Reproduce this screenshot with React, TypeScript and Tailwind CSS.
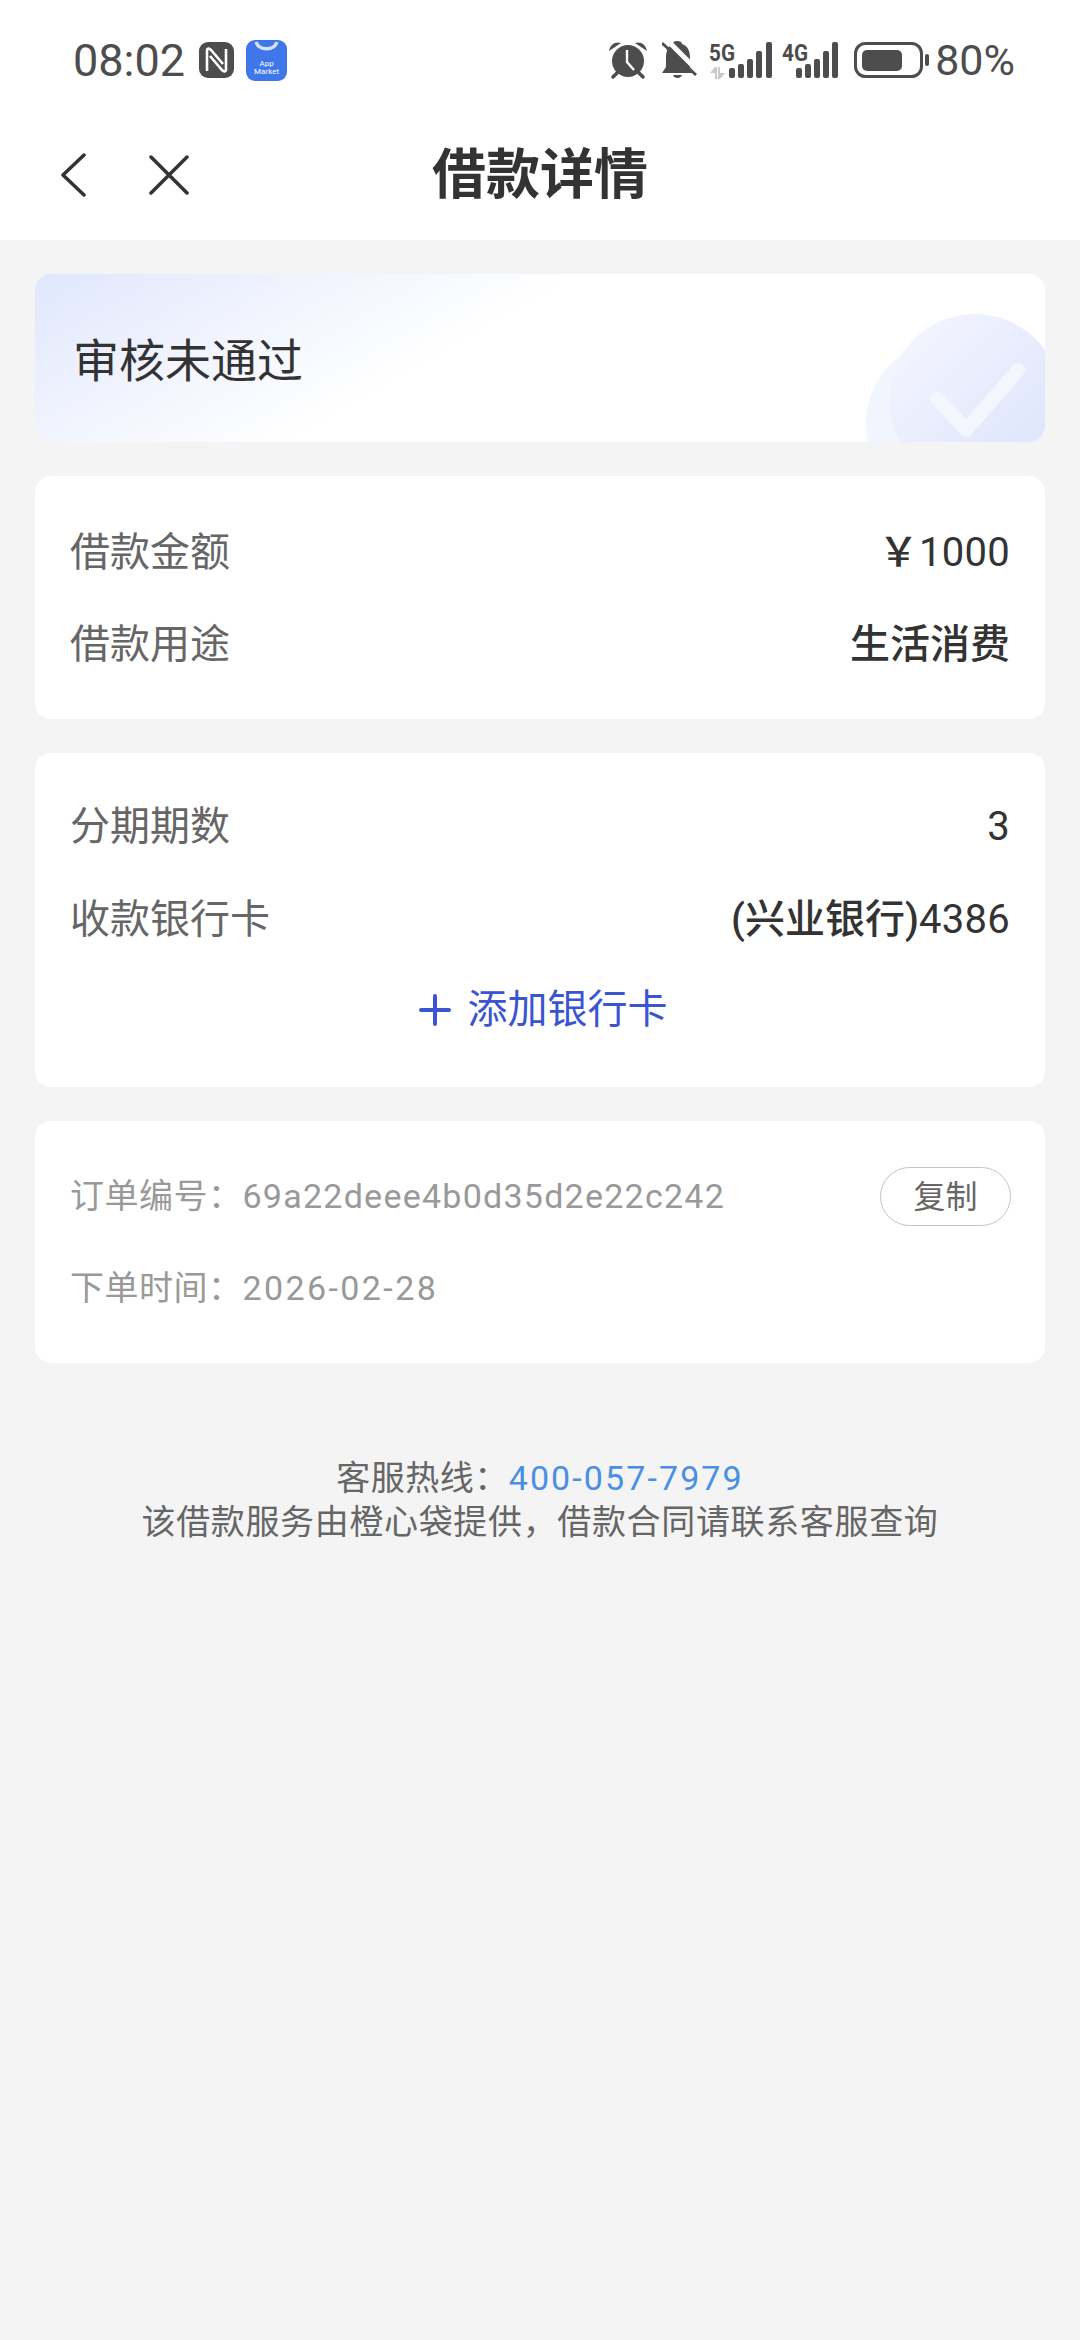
const FONT = "font-['Roboto','Noto_Sans_CJK_SC',sans-serif]";

function StatusIcons() {
  return (
    <div className="flex items-center">
      {/* alarm */}
      <svg width="38" height="38" viewBox="0 0 38 38" className="text-[#4d4d4d]">
        <circle cx="19" cy="20" r="16" fill="currentColor" />
        <path d="M0 10 C1 3 7 0 12 2 Z M38 10 C37 3 31 0 26 2 Z" fill="currentColor" />
        <path d="M8 32 L4 36 M30 32 L34 36" stroke="currentColor" strokeWidth="3.5" strokeLinecap="round" />
        <path d="M18 9 V21 L25 29" fill="none" stroke="#fff" strokeWidth="2.4" />
      </svg>
      {/* muted bell */}
      <svg width="36" height="38" viewBox="0 0 36 38" className="ml-[15px]">
        <path d="M15 0 C18 0 20 1 20 3 C26 5 28 10 28 17 V26 L31 32 H0 L4 26 V17 C4 10 6 5 11 3 C11 1 12 0 15 0 Z" fill="#4d4d4d" />
        <path d="M11 34 H20 C19 38 12 38 11 34 Z" fill="#4d4d4d" />
        <path d="M3 -3 L37 31" stroke="#fff" strokeWidth="5" />
        <path d="M0 2 L34 34" stroke="#4d4d4d" strokeWidth="2.8" />
        <path d="M-2 -6 L8 4 L0 12 Z" fill="#fff" />
        <path d="M0 2 L6 7.6" stroke="#4d4d4d" strokeWidth="2.8" />
      </svg>
      {/* 5G */}
      <svg width="64" height="38" viewBox="0 0 64 38" className="ml-[11px] overflow-visible">
        <text x="0" y="20" fontFamily="Roboto, sans-serif" fontSize="24" fontWeight="700" fill="#4d4d4d" textLength="26" lengthAdjust="spacingAndGlyphs">5G</text>
        <path d="M6 26 L1 32 H6 V38 H8 V26 Z M11 38 L16 32 H11 V26 H9 V38 Z" fill="#c9c9c9" />
        <rect x="20" y="27" width="6" height="10" rx="2" fill="#4d4d4d" />
        <rect x="29" y="23" width="6" height="14" rx="2" fill="#4d4d4d" />
        <rect x="38" y="18" width="6" height="19" rx="2" fill="#4d4d4d" />
        <rect x="47" y="10" width="6" height="27" rx="2" fill="#4d4d4d" />
        <rect x="57" y="1" width="6" height="36" rx="2" fill="#4d4d4d" />
      </svg>
      {/* 4G */}
      <svg width="57" height="38" viewBox="0 0 57 38" className="ml-[9px] overflow-visible">
        <text x="0" y="20" fontFamily="Roboto, sans-serif" fontSize="24" fontWeight="700" fill="#4d4d4d" textLength="26" lengthAdjust="spacingAndGlyphs">4G</text>
        <rect x="14" y="27" width="6" height="10" rx="2" fill="#4d4d4d" />
        <rect x="23" y="23" width="6" height="14" rx="2" fill="#4d4d4d" />
        <rect x="32" y="18" width="6" height="19" rx="2" fill="#4d4d4d" />
        <rect x="41" y="10" width="6" height="27" rx="2" fill="#4d4d4d" />
        <rect x="50" y="1" width="6" height="36" rx="2" fill="#4d4d4d" />
      </svg>
      {/* battery */}
      <svg width="76" height="38" viewBox="0 0 76 38" className="ml-[15px]">
        <rect x="1.5" y="2.5" width="66" height="33" rx="10" fill="none" stroke="#4d4d4d" strokeWidth="3" />
        <rect x="8" y="9" width="40" height="21" rx="5" fill="#4d4d4d" />
        <rect x="71" y="13" width="4" height="12" rx="2" fill="#4d4d4d" />
      </svg>
      <span className="ml-[5px] text-[43px] leading-none text-[#4d4d4d]">80%</span>
    </div>
  );
}

function Row({ label, cjk, digits, className }: { label: string; cjk?: string; digits?: string; className: string }) {
  return (
    <div className={`flex items-center justify-between ${className}`}>
      <span className="text-[40px] text-[#666666]">{label}</span>
      <span className="text-[40px] text-[#333333]">
        {cjk && <span className="font-medium">{cjk}</span>}
        {digits && <span className="font-[450] tracking-[0.3px]">{digits}</span>}
      </span>
    </div>
  );
}

export default function App() {
  return (
    <div className={`flex min-h-[2340px] w-[1080px] flex-col bg-[#f4f4f4] ${FONT}`}>
      {/* status bar */}
      <div className="flex h-[120px] items-center justify-between bg-white pr-[65px] pl-[73px]">
        <div className="flex items-center">
          <span className="text-[45px] leading-none text-[#4d4d4d]">08:02</span>
          <svg width="35" height="36" viewBox="0 0 35 36" className="ml-[14px]">
            <rect x="0" y="0" width="35" height="36" rx="9" fill="#4d4d4d" />
            <path d="M8 29 V9 C8 6 10 6 12 8 L24 22 M27 7 V27 C27 30 25 30 23 28 L11 14" fill="none" stroke="#fff" strokeWidth="2.6" />
          </svg>
          <div className="relative ml-[12px] h-[41px] w-[41px] rounded-[9px] bg-[#3f76ea]">
            <svg width="41" height="14" viewBox="0 0 41 14" className="absolute top-0 left-0">
              <path d="M10 2 C13 11 28 11 31 2" fill="none" stroke="#d6e2fb" strokeWidth="3.5" />
            </svg>
            <div className="absolute right-0 bottom-[5px] left-0 text-center text-[8px] leading-[8px] text-white">
              App
              <br />
              Market
            </div>
          </div>
        </div>
        <StatusIcons />
      </div>

      {/* nav */}
      <div className="relative flex h-[120px] items-center justify-center bg-white pb-[8px]">
        <svg width="26" height="44" viewBox="0 0 26 44" className="absolute top-[33px] left-[60px]">
          <path d="M24 2 L3 22 L24 42" fill="none" stroke="#333333" strokeWidth="3.5" strokeLinecap="round" strokeLinejoin="round" />
        </svg>
        <svg width="40" height="40" viewBox="0 0 40 40" className="absolute top-[35px] left-[149px]">
          <path d="M2 2 L38 38 M38 2 L2 38" fill="none" stroke="#333333" strokeWidth="3.5" strokeLinecap="round" />
        </svg>
        <span className="text-[54px] leading-none font-bold text-[#333333]">借款详情</span>
      </div>

      <div className="flex flex-col gap-[34px] px-[35px] pt-[34px]">
        {/* status card */}
        <div className="relative flex h-[168px] items-center overflow-hidden rounded-[16px] bg-[linear-gradient(150deg,#e0e7fd_0%,#f1f4fe_22%,#ffffff_42%)] pt-[6px] pl-[38px]">
          <span className="text-[46px] text-[#333333]">审核未通过</span>
          <svg width="190" height="140" viewBox="0 0 190 140" className="absolute right-0 bottom-0">
            <defs>
              <linearGradient id="disc" x1="0" y1="0" x2="1" y2="1">
                <stop offset="0%" stopColor="#f6f7fe" />
                <stop offset="100%" stopColor="#d9e1fc" />
              </linearGradient>
            </defs>
            <circle cx="93" cy="121" r="82" fill="#f3f5fe" />
            <circle cx="120" cy="98" r="86" fill="url(#disc)" />
            <path d="M82 96 L111 128 L163 68" fill="none" stroke="#f4f6fe" strokeWidth="14" strokeLinecap="round" strokeLinejoin="round" />
          </svg>
        </div>

        <div className="rounded-[16px] bg-white px-[35px] pt-[31px] pb-[28px]">
          <Row label="借款金额" digits="￥1000" className="h-[91px]" />
          <Row label="借款用途" cjk="生活消费" className="h-[93px]" />
        </div>

        <div className="rounded-[16px] bg-white px-[35px] pt-[28px] pb-[34px]">
          <Row label="分期期数" digits="3" className="h-[92px]" />
          <Row label="收款银行卡" cjk="(兴业银行)" digits="4386" className="h-[94px]" />
          <div className="ml-[6px] flex h-[86px] items-center justify-center">
            <svg width="32" height="32" viewBox="0 0 32 32" className="mr-[17px]">
              <path d="M16 2 V30 M2 16 H30" stroke="#3b55d0" strokeWidth="4" strokeLinecap="round" />
            </svg>
            <span className="text-[40px] text-[#3b55d0]">添加银行卡</span>
          </div>
        </div>

        <div className="rounded-[16px] bg-white px-[35px] pt-[30px] pb-[28px]">
          <div className="flex h-[91px] items-center justify-between">
            <span className="text-[34px] text-[#999999]">
              <span className="tracking-[0.5px]">订单编号：</span>
              <span className="tracking-[1.25px]">69a22deee4b0d35d2e22c242</span>
            </span>
            <button className="-mr-px flex h-[59px] w-[131px] items-center justify-center rounded-full border border-[#c4c4c4] text-[32px] text-[#666666]">
              复制
            </button>
          </div>
          <div className="flex h-[93px] items-center">
            <span className="text-[34px] text-[#999999]">
              <span className="tracking-[0.5px]">下单时间：</span>
              <span className="tracking-[2.4px]">2026-02-28</span>
            </span>
          </div>
        </div>
      </div>

      {/* footer */}
      <div className="mt-[93px] text-center text-[34px] leading-[44px] text-[#666666]">
        <div>
          <span className="tracking-[0.5px]">客服热线：</span>
          <span className="tracking-[2.1px] text-[#4a8fe3]">400-057-7979</span>
        </div>
        <div className="tracking-[0.65px]">该借款服务由橙心袋提供，借款合同请联系客服查询</div>
      </div>
    </div>
  );
}
